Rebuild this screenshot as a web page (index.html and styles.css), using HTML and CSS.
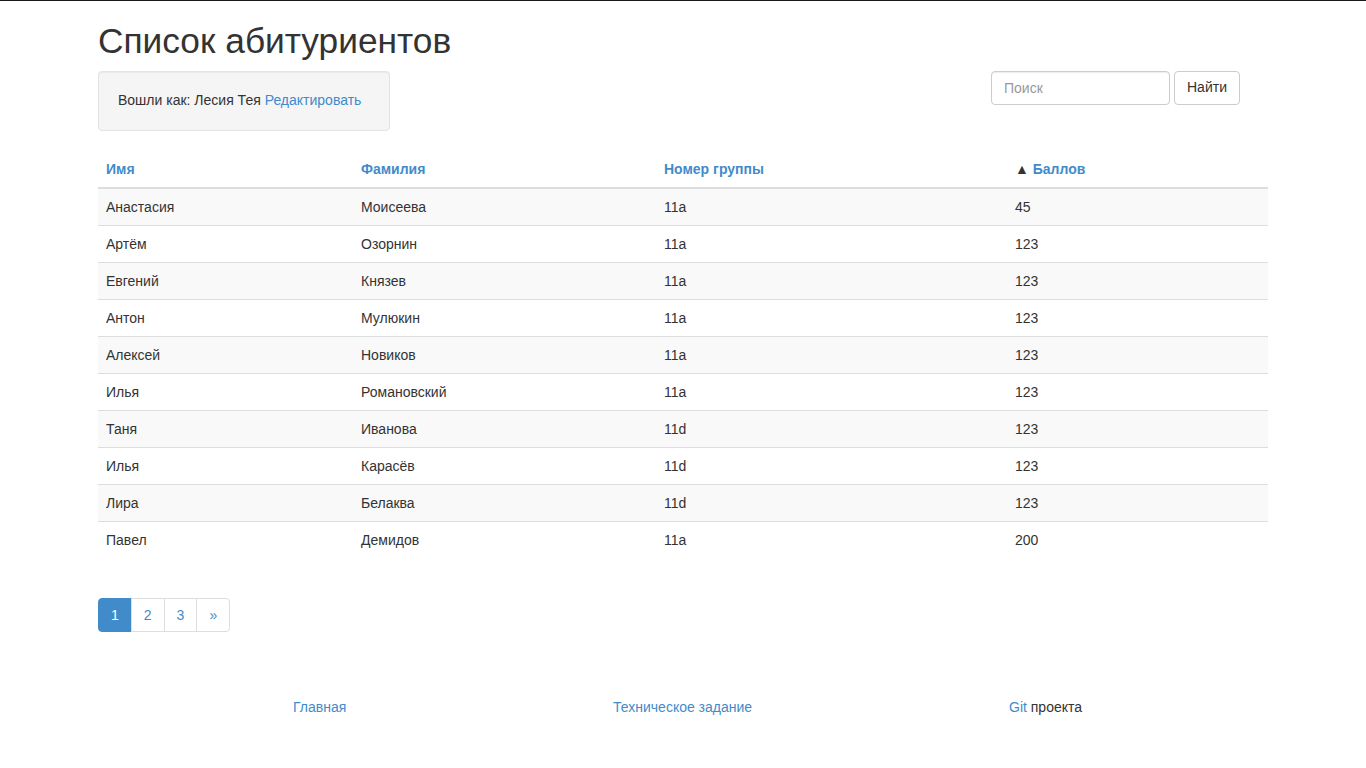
FILE: index.html
```html
<!DOCTYPE html>
<html lang="ru">
<head>
<meta charset="utf-8">
<title>Список абитуриентов</title>
<link rel="stylesheet" href="styles.css">
</head>
<body>
<div class="container">
  <h1 class="title">Список абитуриентов</h1>
  <div class="top-row">
    <div class="well">Вошли как: Лесия Тея <a href="#">Редактировать</a></div>
    <form class="search">
      <input class="search-input" type="text" placeholder="Поиск">
      <button class="btn" type="button">Найти</button>
    </form>
  </div>
  <table class="table">
    <thead>
      <tr>
        <th class="c1"><a href="#">Имя</a></th>
        <th class="c2"><a href="#">Фамилия</a></th>
        <th class="c3"><a href="#">Номер группы</a></th>
        <th class="c4">▲ <a href="#">Баллов</a></th>
      </tr>
    </thead>
    <tbody>
      <tr><td>Анастасия</td><td>Моисеева</td><td>11a</td><td>45</td></tr>
      <tr><td>Артём</td><td>Озорнин</td><td>11a</td><td>123</td></tr>
      <tr><td>Евгений</td><td>Князев</td><td>11a</td><td>123</td></tr>
      <tr><td>Антон</td><td>Мулюкин</td><td>11a</td><td>123</td></tr>
      <tr><td>Алексей</td><td>Новиков</td><td>11a</td><td>123</td></tr>
      <tr><td>Илья</td><td>Романовский</td><td>11a</td><td>123</td></tr>
      <tr><td>Таня</td><td>Иванова</td><td>11d</td><td>123</td></tr>
      <tr><td>Илья</td><td>Карасёв</td><td>11d</td><td>123</td></tr>
      <tr><td>Лира</td><td>Белаква</td><td>11d</td><td>123</td></tr>
      <tr><td>Павел</td><td>Демидов</td><td>11a</td><td>200</td></tr>
    </tbody>
  </table>
  <ul class="pagination">
    <li class="active"><a href="#">1</a></li>
    <li><a href="#">2</a></li>
    <li><a href="#">3</a></li>
    <li><a href="#">»</a></li>
  </ul>
  <footer class="footer">
    <a href="#">Главная</a>
    <a href="#">Техническое задание</a>
    <span><a href="#">Git</a> проекта</span>
  </footer>
</div>
</body>
</html>
```
FILE: styles.css
```css
* { box-sizing: border-box; }
html, body { margin: 0; padding: 0; }
body {
  border-top: 1px solid #1a1a1a;
  font-family: "Liberation Sans", Arial, sans-serif;
  font-size: 14px;
  line-height: 1.42857;
  color: #333;
  background: #fff;
}
a { color: #428bca; text-decoration: none; }
.container { width: 1170px; margin: 0 auto; }
.title {
  margin: 20px 0 10px;
  font-size: 35.3px;
  font-weight: 500;
  line-height: 39.6px;
}
.top-row { display: flex; align-items: flex-start; }
.well {
  width: 292px;
  padding: 19px;
  background: #f5f5f5;
  border: 1px solid #e3e3e3;
  border-radius: 4px;
  box-shadow: inset 0 1px 1px rgba(0,0,0,0.05);
  margin-bottom: 20px;
}
.search { margin-left: 601px; display: flex; gap: 4px; }
.search-input {
  width: 179px;
  height: 34px;
  padding: 6px 12px;
  font: inherit;
  color: #555;
  border: 1px solid #ccc;
  border-radius: 4px;
  box-shadow: inset 0 1px 1px rgba(0,0,0,0.075);
}
.search-input::placeholder { color: #999; }
.btn {
  height: 34px;
  padding: 6px 12px;
  font: inherit;
  color: #333;
  background: #fff;
  border: 1px solid #ccc;
  border-radius: 4px;
}
.table { width: 100%; border-collapse: collapse; border-spacing: 0; margin-bottom: 20px; }
.table th, .table td { padding: 8px; line-height: 20px; text-align: left; vertical-align: top; }
.table th { font-weight: bold; border-bottom: 2px solid #ddd; }
.table td { border-top: 1px solid #ddd; }
.table tbody tr:first-child td { border-top: 0; }
.table tbody tr:nth-child(odd) { background: #f9f9f9; }
.c1 { width: 255px; }
.c2 { width: 303px; }
.c3 { width: 351px; }
.pagination { display: flex; list-style: none; margin: 40px 0 20px; padding: 0; }
.pagination a {
  display: block;
  padding: 6px 12px;
  line-height: 20px;
  border: 1px solid #ddd;
  margin-left: -1px;
  background: #fff;
  color: #428bca;
}
.pagination li:first-child a { margin-left: 0; border-radius: 4px 0 0 4px; }
.pagination li:last-child a { border-radius: 0 4px 4px 0; }
.pagination .active a { background: #428bca; border-color: #428bca; color: #fff; }
.footer {
  display: grid;
  grid-template-columns: 320px 396px auto;
  padding: 46px 0 0 195px;
}
```
